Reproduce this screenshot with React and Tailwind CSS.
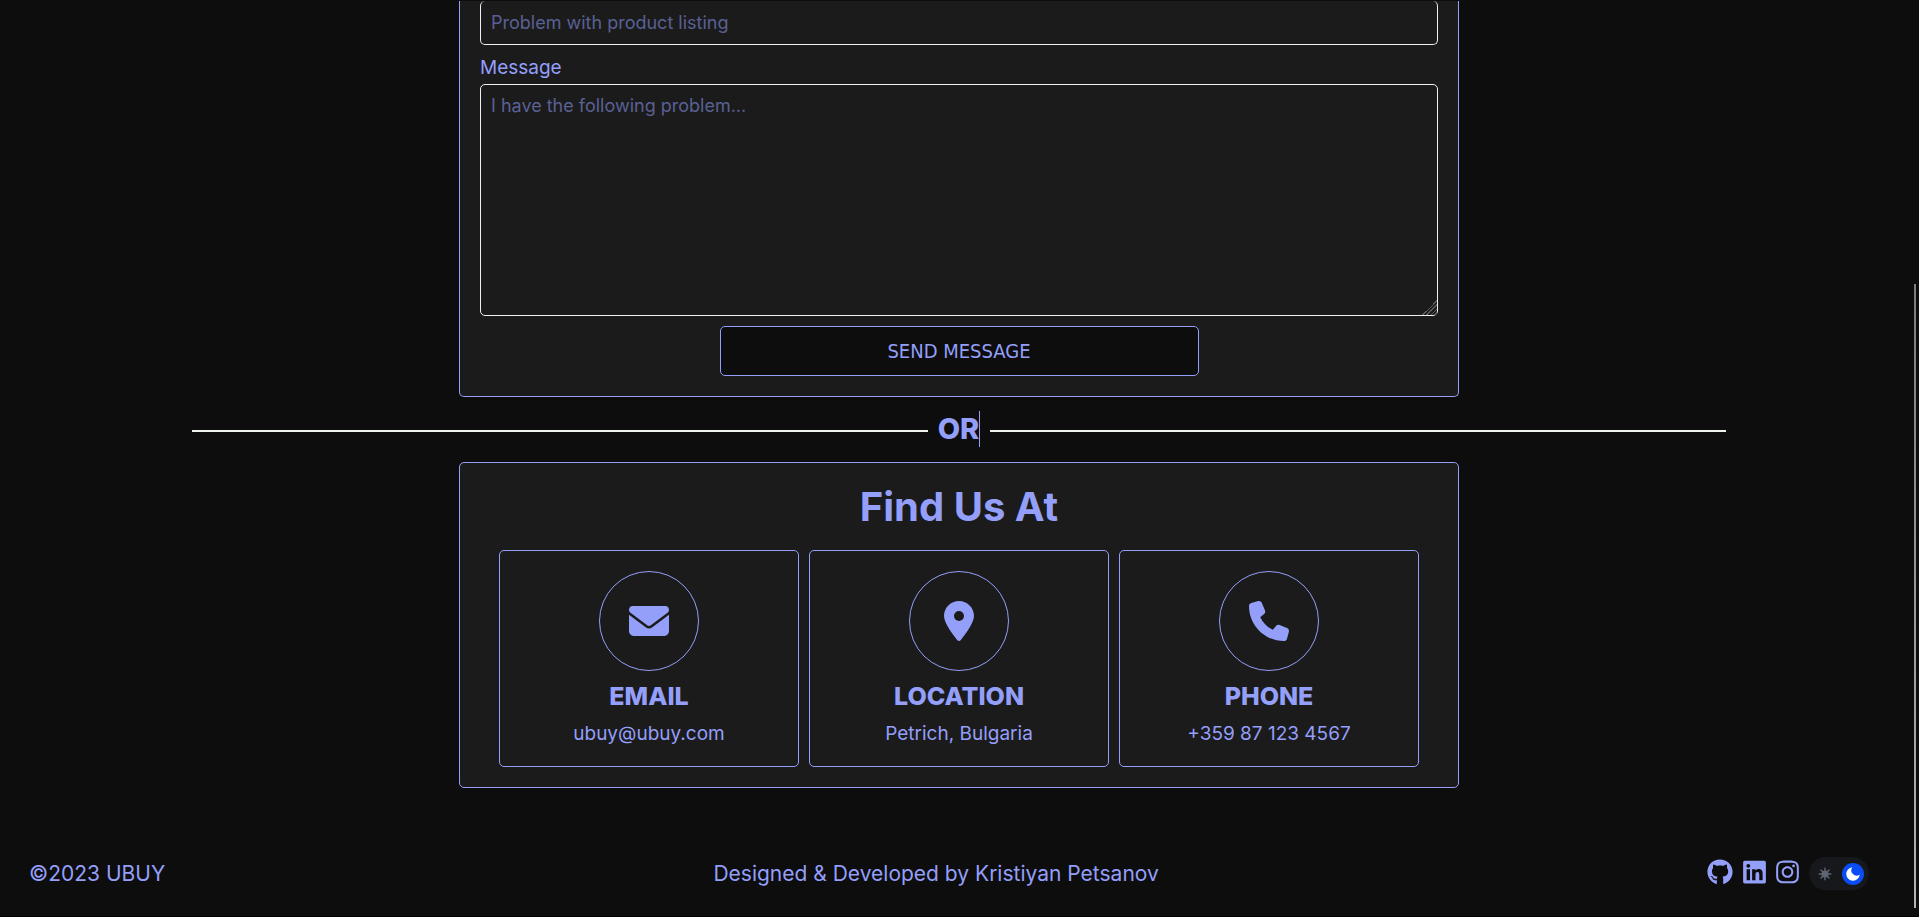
import React, { useState } from "react";
import {
  FaEnvelope,
  FaLocationDot,
  FaPhone,
  FaGithub,
  FaLinkedin,
  FaInstagram,
} from "react-icons/fa6";

const contacts = [
  { title: "EMAIL", text: "ubuy@ubuy.com", Icon: FaEnvelope },
  { title: "LOCATION", text: "Petrich, Bulgaria", Icon: FaLocationDot },
  { title: "PHONE", text: "+359 87 123 4567", Icon: FaPhone },
];

function ContactForm() {
  return (
    <form
      className="flex w-full max-w-[1000px] flex-col rounded-b-[5px] border border-t-0 border-[#949ffa] bg-[#1b1b1b] px-5 pb-5"
      onSubmit={(e) => e.preventDefault()}
    >
      <input
        type="text"
        aria-label="Subject"
        placeholder="Problem with product listing"
        className="h-11 w-full rounded-[5px] border border-t-0 border-[#f0f0f0] bg-transparent px-[10px] text-[18px] outline-none placeholder:text-[#5a6094]"
      />
      <label htmlFor="message" className="mt-[11px] mb-1 text-[19px] leading-6">
        Message
      </label>
      <textarea
        id="message"
        placeholder="I have the following problem..."
        className="h-[232px] w-full resize rounded-[5px] border border-[#f0f0f0] bg-transparent p-[10px] text-[18px] leading-[22px] outline-none placeholder:text-[#5a6094] [&::-webkit-resizer]:bg-[linear-gradient(135deg,transparent_50%,#5c5c5c_50%,#5c5c5c_55%,transparent_55%,transparent_63%,#5c5c5c_63%,#5c5c5c_68%,transparent_68%,transparent_77%,#5c5c5c_77%,#5c5c5c_82%,transparent_82%,transparent_90%,#5c5c5c_90%,#5c5c5c_95%,transparent_95%)]"
      />
      <button
        type="submit"
        className="mt-[10px] h-[50px] w-1/2 self-center rounded-[5px] border border-[#949ffa] bg-[#0d0d0d] font-['DejaVu_Sans_Condensed','DejaVu_Sans',sans-serif] text-[20px]"
      >
        SEND MESSAGE
      </button>
    </form>
  );
}

function OrDivider() {
  return (
    <div className="mt-[14px] mb-[11px] flex h-10 w-4/5 items-center gap-[10px]">
      <div className="h-[2px] flex-1 bg-[#f0f4ee]" />
      <h2 className="self-start border-r border-[#949ffa] text-[29px] leading-9 font-extrabold">OR</h2>
      <div className="h-[2px] flex-1 bg-[#f0f4ee]" />
    </div>
  );
}

function FindUs() {
  return (
    <section className="w-full max-w-[1000px] rounded-[5px] border border-[#949ffa] bg-[#1b1b1b] px-[39px] py-5">
      <h1 className="mb-5 text-center text-[40px] leading-[47px] font-bold">Find Us At</h1>
      <div className="grid grid-cols-3 gap-[10px]">
        {contacts.map(({ title, text, Icon }) => (
          <article
            key={title}
            className="flex flex-col items-center gap-[10px] rounded-[5px] border border-[#949ffa] py-5"
          >
            <div className="flex size-[100px] items-center justify-center rounded-full border border-[#949ffa]">
              <Icon className="size-10" />
            </div>
            <h3 className="text-[25px] leading-[31px] font-extrabold">{title}</h3>
            <p className="text-[19px] leading-6">{text}</p>
          </article>
        ))}
      </div>
    </section>
  );
}

function SunIcon() {
  return (
    <svg viewBox="0 0 24 24" className="size-[14px]" stroke="currentColor" strokeWidth="2.4" strokeLinecap="round">
      <circle cx="12" cy="12" r="6" fill="currentColor" stroke="none" />
      <path d="M12 2v20M2 12h20M5 5l14 14M19 5L5 19" />
    </svg>
  );
}

function MoonIcon() {
  return (
    <svg viewBox="0 0 24 24" className="size-[18px]" fill="currentColor">
      <path d="M21 12.79A9 9 0 1 1 11.21 3 7 7 0 0 0 21 12.79z" />
    </svg>
  );
}

function ThemeToggle() {
  const [dark, setDark] = useState(true);
  return (
    <button
      type="button"
      role="switch"
      aria-checked={dark}
      aria-label="Dark theme"
      onClick={() => setDark(!dark)}
      className="flex h-[33px] w-[60px] items-center justify-between rounded-full bg-[#16181c] px-[5px]"
    >
      <span className="flex size-[22px] items-center justify-center rounded-full text-[#5f6673]">
        <SunIcon />
      </span>
      <span className="flex size-[22px] items-center justify-center rounded-full bg-[#0a4df5] text-white">
        <MoonIcon />
      </span>
    </button>
  );
}

function Footer() {
  return (
    <footer className="mt-[69px] flex w-full items-center justify-between pr-[49px] pb-[26px] pl-[29px] text-[21px] leading-[33px]">
      <p>©2023 UBUY</p>
      <p>Designed &amp; Developed by Kristiyan Petsanov</p>
      <div className="flex items-center gap-[10px]">
        <nav aria-label="Social" className="flex gap-[10px] pb-[3px]">
          <a href="#github" aria-label="GitHub">
            <FaGithub className="size-[26px]" />
          </a>
          <a href="#linkedin" aria-label="LinkedIn">
            <FaLinkedin className="h-[26px] w-[23px]" />
          </a>
          <a href="#instagram" aria-label="Instagram">
            <FaInstagram className="h-[26px] w-[23px]" />
          </a>
        </nav>
        <ThemeToggle />
      </div>
    </footer>
  );
}

export default function App() {
  return (
    <div className="relative flex min-h-screen flex-col items-center border-b border-black bg-[#0d0d0d] pt-px pr-px font-[Inter,sans-serif] text-[#949ffa]">
      <ContactForm />
      <OrDivider />
      <FindUs />
      <Footer />
      <div className="absolute top-[284px] right-[3px] bottom-2 w-[2px] bg-linear-to-b from-[#7c7c7c] to-[#b4b4b4]" />
    </div>
  );
}
